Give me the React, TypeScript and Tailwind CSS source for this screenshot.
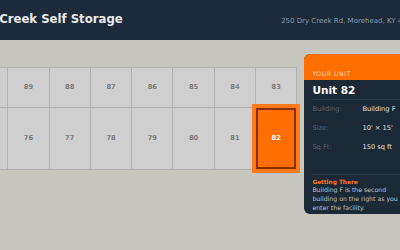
const topRow = [90, 89, 88, 87, 86, 85, 84, 83]
const bottomRow = [75, 76, 77, 78, 79, 80, 81, 82]
const selected = 82

function Cell({ n, tall }: { n: number; tall?: boolean }) {
  const active = n === selected
  return (
    <div
      className={
        active
          ? "relative z-10 flex w-[40.3px] items-center justify-center border-2 border-[#8a3000] bg-[#ff6e00] text-white ring-4 ring-[#ff7a1a] " +
            (tall ? "h-[61px]" : "h-[39px]")
          : "flex w-[40.3px] items-center justify-center bg-[#cfcfcf] text-[#7a7a7a] " +
            (tall ? "h-[61px]" : "h-[39px]")
      }
    >
      <span className="text-[6.7px] font-bold leading-none">{n}</span>
    </div>
  )
}

export default function App() {
  return (
    <div className="h-[250px] w-[400px] overflow-hidden bg-[#c8c7bf] font-['DejaVu_Sans',sans-serif]">
      <div className="-ml-[34px] w-[480px]">
        {/* Header */}
        <header className="flex h-[40px] items-baseline bg-[#1c2a3c] pl-[6px] pr-[26px] pt-[14px]">
          <h1 className="text-[11.7px] font-bold leading-none text-[#e8eaec]">Dry Creek Self Storage</h1>
          <span className="ml-auto text-[7px] leading-none text-[#8d9bab]">250 Dry Creek Rd, Morehead, KY 40351</span>
        </header>

        <main className="flex items-start gap-[7px] pt-[14px]">
          {/* Unit grid */}
          <div className="mt-[13px] flex flex-col gap-px bg-[#b2b2b2] p-px">
            <div className="flex gap-px">
              {topRow.map((n) => (
                <Cell key={n} n={n} />
              ))}
            </div>
            <div className="flex gap-px">
              {bottomRow.map((n) => (
                <Cell key={n} n={n} tall />
              ))}
            </div>
          </div>

          {/* Unit panel */}
          <aside className="w-[108px] shrink-0 overflow-hidden rounded-[6px] bg-[#1b2836]">
            <div className="h-[26px] bg-[#ff6e00] px-[8px] pt-[5px]">
              <span className="text-[6.2px] uppercase leading-none tracking-[0.5px] text-[#ffd6b8]">Your Unit</span>
            </div>
            <div className="px-[8px] pb-[2px]">
              <div className="border-b border-[#2e3d4e] pb-[3px] pt-[4px] text-[10.5px] font-bold leading-[12px] text-white">
                Unit 82
              </div>
              {[
                ["Building:", "Building F"],
                ["Size:", "10' × 15'"],
                ["Sq Ft:", "150 sq ft"],
              ].map(([label, value]) => (
                <div key={label} className="flex h-[19px] items-center text-[6.7px] leading-none">
                  <span className="w-[50px] text-[#56677a]">{label}</span>
                  <span className="text-[#dfe3e8]">{value}</span>
                </div>
              ))}
              <div className="mt-[17px] border-t border-[#2e3d4e] pt-[3px]">
                <div className="text-[5.8px] font-bold leading-[8px] text-[#ff7a1a]">Getting There</div>
                <p className="text-[6.2px] leading-[8.8px] text-[#bcc4cd]">
                  Building F is the second building on the right as you enter the facility.
                </p>
              </div>
            </div>
          </aside>
        </main>
      </div>
    </div>
  )
}
